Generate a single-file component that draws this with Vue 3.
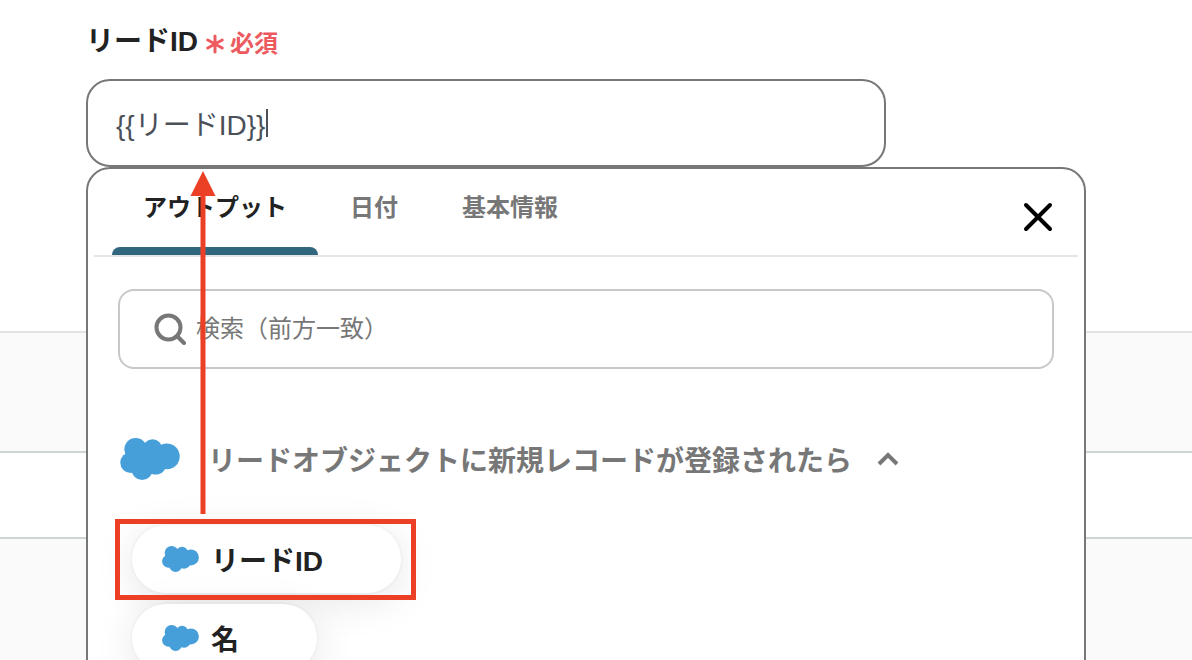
<script setup>
import { ref } from 'vue'

const leadId = ref('{{リードID}}')
const keyword = ref('')
const open = ref(true)
const activeTab = ref('output')

const tabs = [
  { id: 'output', label: 'アウトプット' },
  { id: 'date', label: '日付' },
  { id: 'basic', label: '基本情報' },
]

const outputs = [
  { label: 'リードID', highlighted: true },
  { label: '名', highlighted: false },
]
</script>

<template>
  <main class="page">
    <svg class="sprite" aria-hidden="true">
      <symbol id="cloud" viewBox="0 0 58 41">
        <g fill="#479fda">
          <circle cx="15" cy="11" r="11" />
          <circle cx="31.5" cy="10.5" r="9.3" />
          <circle cx="45.4" cy="18" r="12.6" />
          <circle cx="34.5" cy="25.2" r="10.5" />
          <circle cx="21.3" cy="30.8" r="10.2" />
          <circle cx="10.2" cy="24" r="10.2" />
          <path d="M8 14L24 6L40 12L42 28L28 33L12 30Z" />
        </g>
      </symbol>
    </svg>

    <section class="field">
      <div class="field-head">
        <label for="lead-id">リードID</label>
        <span class="required">
          <svg width="18" height="20" viewBox="0 0 18 20" aria-hidden="true">
            <path d="M9 2V18M1.8 6L16.2 14M16.2 6L1.8 14" stroke="#ec5a60" stroke-width="3" stroke-linecap="round" />
          </svg>
          必須
        </span>
      </div>
      <div class="control">
        <input id="lead-id" v-model="leadId" type="text" class="text-input" />
        <span class="caret"></span>

        <div v-if="open" class="popup">
          <div class="tab-bar">
            <div class="tabs" role="tablist">
              <button
                v-for="tab in tabs"
                :key="tab.id"
                type="button"
                role="tab"
                class="tab"
                :class="{ active: activeTab === tab.id }"
                :aria-selected="activeTab === tab.id"
                @click="activeTab = tab.id"
              >{{ tab.label }}</button>
            </div>
            <button type="button" class="close" aria-label="閉じる" @click="open = false">
              <svg width="32" height="32" viewBox="0 0 32 32">
                <path d="M4 4L28 28M28 4L4 28" stroke="#000" stroke-width="4" stroke-linecap="round" />
              </svg>
            </button>
          </div>

          <div class="popup-body">
            <div class="search">
              <svg width="32" height="32" viewBox="0 0 32 32" fill="none" stroke="#777" stroke-width="4" aria-hidden="true">
                <circle cx="14.5" cy="14.5" r="12" />
                <path d="M23 23L30 30" stroke-linecap="round" />
              </svg>
              <input v-model="keyword" type="text" aria-label="検索" placeholder="検索（前方一致）" />
            </div>

            <button type="button" class="group">
              <svg class="cloud-large"><use href="#cloud" /></svg>
              <span>リードオブジェクトに新規レコードが登録されたら</span>
              <svg class="chevron" width="24" height="16" viewBox="0 0 24 16" fill="none" aria-hidden="true">
                <path d="M3 13L12 4L21 13" stroke="#777" stroke-width="4" />
              </svg>
            </button>

            <ul class="outputs">
              <li v-for="item in outputs" :key="item.label">
                <button type="button" class="pill">
                  <svg class="cloud-small"><use href="#cloud" /></svg>
                  <span>{{ item.label }}</span>
                </button>
                <span v-if="item.highlighted" class="highlight"></span>
              </li>
            </ul>
          </div>
        </div>

        <svg class="arrow" width="26" height="344" viewBox="0 0 26 344" aria-hidden="true">
          <path d="M13 0L25.5 25H15.5V343H10.5V25H0.5Z" fill="#eb4026" />
        </svg>
      </div>
    </section>

    <div class="band shaded"></div>
    <div class="band plain"></div>
    <div class="band shaded rest"></div>
  </main>
</template>

<style>
body {
  margin: 0;
  background: #fff;
}
</style>

<style scoped>
.page {
  display: flex;
  flex-direction: column;
  height: 100vh;
  overflow: hidden;
  box-sizing: border-box;
  color: #222;
  font-family: "Liberation Sans", "Noto Sans CJK JP", sans-serif;
}
.sprite {
  position: absolute;
  width: 0;
  height: 0;
}
button {
  margin: 0;
  padding: 0;
  border: 0;
  background: none;
  color: inherit;
  font: inherit;
  cursor: pointer;
}
svg {
  flex: none;
}
.field {
  padding: 22px 106px 164px 86px;
}
.field-head {
  display: flex;
  align-items: center;
  gap: 8px;
  height: 40px;
  margin-bottom: 17px;
  font-size: 28px;
  line-height: 40px;
  font-weight: 700;
}
.required {
  display: flex;
  align-items: center;
  gap: 6px;
  padding-top: 4px;
  color: #ec5a60;
  font-size: 24px;
}
.control {
  position: relative;
}
.text-input {
  display: block;
  width: 80%;
  height: 88px;
  box-sizing: border-box;
  padding: 0 28px;
  border: 2px solid #777;
  border-radius: 24px;
  outline: 0;
  background: #fff;
  color: #4b5059;
  font: inherit;
  font-size: 28px;
}
.caret {
  position: absolute;
  top: 30px;
  left: 180px;
  width: 2px;
  height: 28px;
  background: #4b5059;
}
.popup {
  position: absolute;
  z-index: 1;
  top: 88px;
  left: 0;
  width: 100%;
  height: 560px;
  box-sizing: border-box;
  border: 2px solid #777;
  border-radius: 24px;
  background: #fff;
  overflow: hidden;
}
.tab-bar {
  display: flex;
  justify-content: space-between;
  height: 86px;
  margin: 0 6px;
  padding: 0 24px 0 18px;
  border-bottom: 2px solid #e5e5e5;
}
.tabs {
  display: flex;
}
.tab {
  position: relative;
  padding: 0 32px 0 32px;
  color: #777;
  font-size: 24px;
  line-height: 36px;
  font-weight: 700;
  padding-bottom: 8px;
}
.tab.active {
  padding-left: 31px;
  padding-right: 31px;
  color: #222;
}
.tab.active::after {
  content: "";
  position: absolute;
  right: 0;
  bottom: 0;
  left: 0;
  height: 8px;
  border-radius: 8px 8px 0 0;
  background: #30667e;
}
.close {
  display: flex;
  align-items: center;
  padding-top: 10px;
}
.popup-body {
  padding: 32px 30px;
}
.search {
  display: flex;
  align-items: center;
  gap: 10px;
  height: 80px;
  box-sizing: border-box;
  padding: 0 34px;
  border: 2px solid #c8c8c8;
  border-radius: 16px;
}
.search input {
  flex: 1;
  min-width: 0;
  padding: 0;
  border: 0;
  outline: 0;
  background: none;
  color: #222;
  font: inherit;
  font-size: 24px;
  line-height: 36px;
}
.search input::placeholder {
  color: #777;
  opacity: 1;
}
.group {
  display: flex;
  align-items: center;
  height: 44px;
  margin: 68px 0 0 2px;
  color: #777;
  font-size: 28px;
  font-weight: 700;
}
.cloud-large {
  width: 60px;
  height: 42px;
  margin-right: 28px;
}
.chevron {
  margin-left: 24px;
}
.outputs {
  display: flex;
  flex-direction: column;
  align-items: flex-start;
  gap: 11px;
  margin: 44px 0 0 14px;
  padding: 0;
  list-style: none;
}
.outputs li {
  position: relative;
}
.pill {
  display: flex;
  align-items: center;
  gap: 12px;
  height: 68px;
  padding: 0 78px 0 30px;
  border-radius: 34px;
  background: #fff;
  box-shadow: 0 0 0 2px rgba(0, 0, 0, 0.02), 0 8px 40px rgba(0, 0, 0, 0.1);
  font-size: 28px;
  font-weight: 700;
}
.cloud-small {
  width: 37px;
  height: 26px;
}
.highlight {
  position: absolute;
  z-index: 1;
  inset: -6px -15px -7px -17px;
  border: 5px solid #eb4026;
  pointer-events: none;
}
.arrow {
  position: absolute;
  z-index: 2;
  top: 92px;
  left: 104px;
  pointer-events: none;
}
.band {
  flex: none;
  box-sizing: border-box;
  border-top: 2px solid #ced3d6;
}
.band.shaded {
  height: 120px;
  border-top-color: #e3e3e3;
  background: #fafafa;
}
.band.plain {
  height: 86px;
  border-top-color: #ced3d6;
}
.band.rest {
  flex: 1;
  border-top-color: #ced3d6;
}
</style>
